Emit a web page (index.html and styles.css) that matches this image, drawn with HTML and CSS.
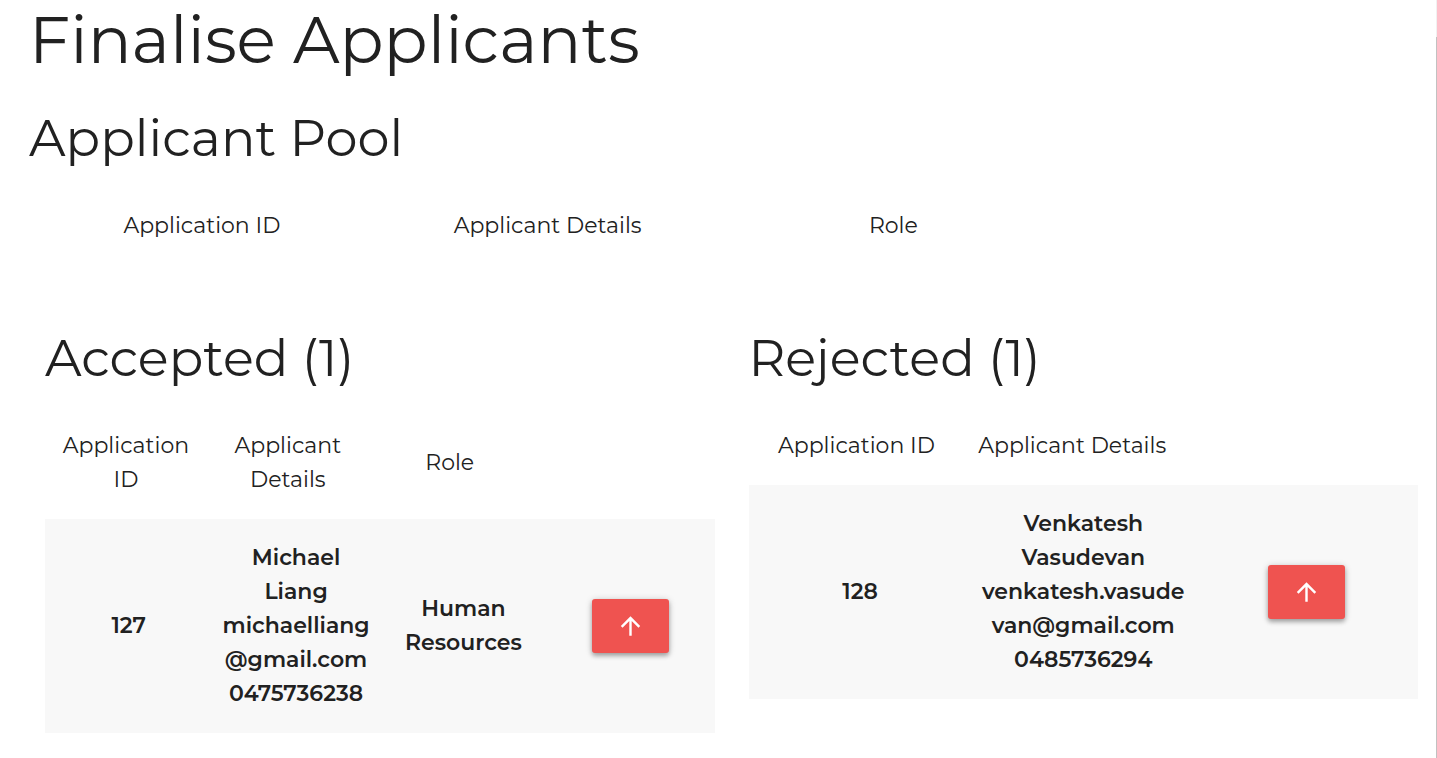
FILE: index.html
```
<!DOCTYPE html>
<html lang="en">
<head>
<meta charset="UTF-8">
<meta name="viewport" content="width=device-width, initial-scale=1.0">
<title>Finalise Applicants</title>
<link rel="stylesheet" href="styles.css">
</head>
<body>
<main class="page">
    <h1>Finalise Applicants</h1>

    <section class="pool">
        <h2>Applicant Pool</h2>
        <table>
            <thead>
                <tr>
                    <th>Application ID</th>
                    <th>Applicant Details</th>
                    <th>Role</th>
                    <th></th>
                </tr>
            </thead>
            <tbody></tbody>
        </table>
    </section>

    <div class="results">
        <section>
            <h2>Accepted (1)</h2>
            <table>
                <thead>
                    <tr>
                        <th>Application<br>ID</th>
                        <th>Applicant<br>Details</th>
                        <th>Role</th>
                        <th></th>
                    </tr>
                </thead>
                <tbody>
                    <tr>
                        <td>127</td>
                        <td>Michael<br>Liang<br>michaelliang<br>@gmail.com<br>0475736238</td>
                        <td>Human<br>Resources</td>
                        <td>
                            <button type="button" class="btn" aria-label="Return to pool">
                                <svg class="icon" viewBox="0 0 24 24"><path d="M4 12l1.41 1.41L11 7.83V20h2V7.83l5.58 5.59L20 12l-8-8-8 8z"/></svg>
                            </button>
                        </td>
                    </tr>
                </tbody>
            </table>
        </section>

        <section>
            <h2>Rejected (1)</h2>
            <table>
                <thead>
                    <tr>
                        <th>Application ID</th>
                        <th>Applicant Details</th>
                        <th></th>
                    </tr>
                </thead>
                <tbody>
                    <tr>
                        <td>128</td>
                        <td>Venkatesh<br>Vasudevan<br>venkatesh.vasude<br>van@gmail.com<br>0485736294</td>
                        <td>
                            <button type="button" class="btn" aria-label="Return to pool">
                                <svg class="icon" viewBox="0 0 24 24"><path d="M4 12l1.41 1.41L11 7.83V20h2V7.83l5.58 5.59L20 12l-8-8-8 8z"/></svg>
                            </button>
                        </td>
                    </tr>
                </tbody>
            </table>
        </section>
    </div>
</main>
</body>
</html>
```
FILE: styles.css
```
* {
    box-sizing: border-box;
}
body {
    margin: 0;
    font-family: Montserrat, Inter, sans-serif;
    font-size: 22px;
    line-height: 34px;
    color: #212121;
    background: #fff;
}
.page {
    min-height: 100vh;
    padding: 4px 0 26px 29px;
    /* scroll track and thumb along the right edge */
    background: linear-gradient(#f1f1f1 37px, #c1c1c1 37px) right / 1px 100% no-repeat;
}
h1, h2 {
    margin: 0;
    font-weight: 400;
}
h1 {
    margin-bottom: 34px;
    font-size: 65px;
    line-height: 72px;
}
h2 {
    margin-bottom: 21px;
    font-size: 51px;
    line-height: 56px;
}
.pool {
    margin-bottom: 65px;
    padding-right: 3px;
}
.results {
    display: grid;
    grid-template-columns: 1fr 1fr;
    gap: 34px;
    align-items: start;
    padding: 0 19px 0 16px;
}
table {
    display: block;
}
thead, tbody {
    display: table;
    width: 100%;
    table-layout: fixed;
    border-collapse: collapse;
}
thead {
    width: calc(100% - 22px);
}
th, td {
    padding: 22px 8px;
    text-align: center;
    vertical-align: middle;
}
th {
    font-weight: 400;
}
td {
    font-weight: 600;
    background: #f8f8f8;
}
.btn {
    display: inline-flex;
    align-items: center;
    justify-content: center;
    padding: 12px 24px;
    border: none;
    border-radius: 3px;
    background: #ef5350;
    color: #fff;
    vertical-align: middle;
    box-shadow: 0 3px 4px rgba(0, 0, 0, 0.25), 0 1px 7px rgba(0, 0, 0, 0.2);
    cursor: pointer;
}
.icon {
    width: 29px;
    height: 30px;
    fill: currentColor;
}
```
